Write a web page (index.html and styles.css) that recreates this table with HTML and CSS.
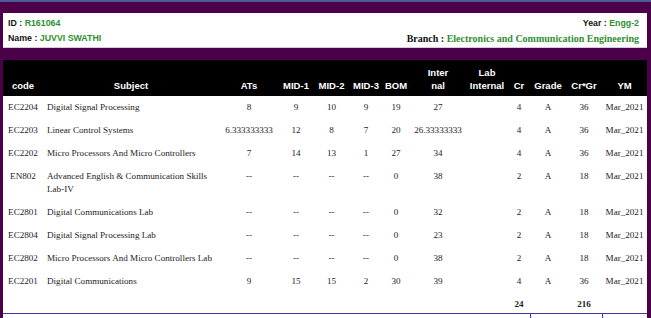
FILE: index.html
```html
<!DOCTYPE html>
<html>
<head>
<meta charset="utf-8">
<link rel="stylesheet" href="styles.css">
</head>
<body>
<div class="topbar"></div>
<div class="page">
  <div class="info">
    <div class="info-left">
      <div class="line"><span class="lbl">ID :</span> <span class="val">R161064</span></div>
      <div class="line"><span class="lbl">Name :</span> <span class="val">JUVVI SWATHI</span></div>
    </div>
    <div class="info-right">
      <div class="line"><span class="lbl">Year :</span> <span class="val">Engg-2</span></div>
      <div class="line serif"><span class="lbl">Branch :</span> <span class="val">Electronics and Communication Engineering</span></div>
    </div>
  </div>
  <table class="marks">
    <colgroup>
      <col class="c-code"><col class="c-subj"><col class="c-ats"><col class="c-m1"><col class="c-m2"><col class="c-m3"><col class="c-bom"><col class="c-int"><col class="c-lab"><col class="c-cr"><col class="c-gr"><col class="c-crgr"><col class="c-ym">
    </colgroup>
    <thead>
      <tr>
        <th>code</th><th>Subject</th><th class="r">ATs</th><th>MID-1</th><th>MID-2</th><th>MID-3</th><th>BOM</th><th>Inter<br>nal</th><th>Lab<br>Internal</th><th>Cr</th><th>Grade</th><th>Cr*Gr</th><th>YM</th>
      </tr>
    </thead>
    <tbody>
      <tr><td>EC2204</td><td class="subj">Digital Signal Processing</td><td>8</td><td>9</td><td>10</td><td>9</td><td>19</td><td>27</td><td></td><td>4</td><td>A</td><td>36</td><td>Mar_2021</td></tr>
      <tr><td>EC2203</td><td class="subj">Linear Control Systems</td><td>6.333333333</td><td>12</td><td>8</td><td>7</td><td>20</td><td>26.33333333</td><td></td><td>4</td><td>A</td><td>36</td><td>Mar_2021</td></tr>
      <tr><td>EC2202</td><td class="subj">Micro Processors And Micro Controllers</td><td>7</td><td>14</td><td>13</td><td>1</td><td>27</td><td>34</td><td></td><td>4</td><td>A</td><td>36</td><td>Mar_2021</td></tr>
      <tr><td>EN802</td><td class="subj">Advanced English &amp; Communication Skills Lab-IV</td><td>--</td><td>--</td><td>--</td><td>--</td><td>0</td><td>38</td><td></td><td>2</td><td>A</td><td>18</td><td>Mar_2021</td></tr>
      <tr><td>EC2801</td><td class="subj">Digital Communications Lab</td><td>--</td><td>--</td><td>--</td><td>--</td><td>0</td><td>32</td><td></td><td>2</td><td>A</td><td>18</td><td>Mar_2021</td></tr>
      <tr><td>EC2804</td><td class="subj">Digital Signal Processing Lab</td><td>--</td><td>--</td><td>--</td><td>--</td><td>0</td><td>23</td><td></td><td>2</td><td>A</td><td>18</td><td>Mar_2021</td></tr>
      <tr><td>EC2802</td><td class="subj">Micro Processors And Micro Controllers Lab</td><td>--</td><td>--</td><td>--</td><td>--</td><td>0</td><td>38</td><td></td><td>2</td><td>A</td><td>18</td><td>Mar_2021</td></tr>
      <tr><td>EC2201</td><td class="subj">Digital Communications</td><td>9</td><td>15</td><td>15</td><td>2</td><td>30</td><td>39</td><td></td><td>4</td><td>A</td><td>36</td><td>Mar_2021</td></tr>
      <tr class="total"><td></td><td></td><td></td><td></td><td></td><td></td><td></td><td></td><td></td><td>24</td><td></td><td>216</td><td></td></tr>
      <tr class="edge"><td></td><td></td><td></td><td></td><td></td><td></td><td></td><td></td><td></td><td></td><td class="tick"></td><td></td><td class="tick"></td></tr>
    </tbody>
  </table>
</div>
</body>
</html>
```

FILE: styles.css
```css
html, body {
  margin: 0;
  padding: 0;
}
body {
  background: #4b0049;
  width: 651px;
  height: 318px;
  overflow: hidden;
}
.topbar {
  height: 2px;
  background: #4d5a98;
}
.page {
  padding: 11px 4px 0 3px;
}
.info {
  background: #ffffff;
  border-bottom: 1px solid #d9c9d9;
  height: 34px;
  display: flex;
  justify-content: space-between;
  padding: 0 8px 0 5px;
  font-family: "Liberation Sans", Arial, sans-serif;
  font-weight: bold;
  font-size: 8.8px;
}
.info .line {
  height: 15px;
  line-height: 15px;
}
.info-left, .info-right {
  padding-top: 3px;
}
.info-right {
  text-align: right;
}
.info .lbl {
  color: #111;
}
.info .val {
  color: #2f8f2f;
}
.info .serif {
  font-family: "Liberation Serif", "Times New Roman", serif;
  font-size: 10px;
}
.marks {
  margin-top: 12px;
  width: 644px;
  border-collapse: collapse;
  table-layout: fixed;
  background: #ffffff;
}
.c-code { width: 40px; }
.c-subj { width: 176px; }
.c-ats { width: 60px; }
.c-m1 { width: 34px; }
.c-m2 { width: 37px; }
.c-m3 { width: 32px; }
.c-bom { width: 28px; }
.c-int { width: 56px; }
.c-lab { width: 42px; }
.c-cr { width: 22px; }
.c-gr { width: 36px; }
.c-crgr { width: 36px; }
.c-ym { width: 45px; }
.marks thead tr {
  background: #000000;
  height: 36px;
}
.marks th {
  color: #ffffff;
  font-family: "Liberation Sans", Arial, sans-serif;
  font-weight: bold;
  font-size: 9.5px;
  line-height: 13px;
  vertical-align: bottom;
  padding: 0 0 4px 0;
  text-align: center;
  white-space: nowrap;
}
.marks td {
  font-family: "Liberation Serif", "Times New Roman", serif;
  font-size: 9.1px;
  line-height: 13px;
  color: #222;
  text-align: center;
  vertical-align: top;
  padding: 5px 0;
  white-space: nowrap;
}
.marks td.subj {
  text-align: left;
  padding-left: 4px;
  padding-right: 2px;
  white-space: normal;
}
.marks tr.total td {
  font-weight: bold;
  padding: 5px 0 2px 0;
}
.marks tr.edge td {
  border-top: 1px solid #3c3ca8;
  padding: 0;
  height: 4px;
  background: #ffffff;
}
.marks tr.edge td.tick {
  border-left: 1px solid #3c3ca8;
}
```
